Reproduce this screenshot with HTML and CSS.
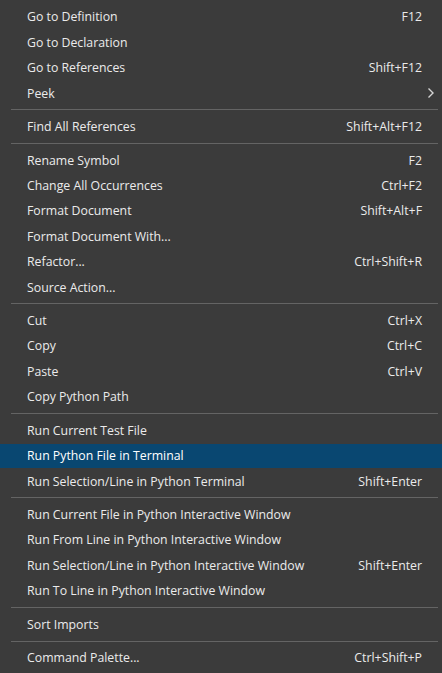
FILE: index.html
```html
<!DOCTYPE html>
<html>
<head>
<meta charset="utf-8">
<link rel="stylesheet" href="styles.css">
</head>
<body>
<div class="menu">
  <div class="item"><span class="label">Go to Definition</span><span class="key">F12</span></div>
  <div class="item"><span class="label">Go to Declaration</span><span class="key"></span></div>
  <div class="item"><span class="label">Go to References</span><span class="key">Shift+F12</span></div>
  <div class="item"><span class="label">Peek</span><span class="key"></span>
    <svg class="chev" width="8" height="12" viewBox="0 0 8 12"><path d="M1.5 1.5 L6 6 L1.5 10.5" fill="none" stroke="#d4d4d4" stroke-width="1.4"/></svg>
  </div>
  <div class="sep"></div>
  <div class="item"><span class="label">Find All References</span><span class="key">Shift+Alt+F12</span></div>
  <div class="sep"></div>
  <div class="item"><span class="label">Rename Symbol</span><span class="key">F2</span></div>
  <div class="item"><span class="label">Change All Occurrences</span><span class="key">Ctrl+F2</span></div>
  <div class="item"><span class="label">Format Document</span><span class="key">Shift+Alt+F</span></div>
  <div class="item"><span class="label">Format Document With...</span><span class="key"></span></div>
  <div class="item"><span class="label">Refactor...</span><span class="key">Ctrl+Shift+R</span></div>
  <div class="item"><span class="label">Source Action...</span><span class="key"></span></div>
  <div class="sep"></div>
  <div class="item"><span class="label">Cut</span><span class="key">Ctrl+X</span></div>
  <div class="item"><span class="label">Copy</span><span class="key">Ctrl+C</span></div>
  <div class="item"><span class="label">Paste</span><span class="key">Ctrl+V</span></div>
  <div class="item"><span class="label">Copy Python Path</span><span class="key"></span></div>
  <div class="sep"></div>
  <div class="item"><span class="label">Run Current Test File</span><span class="key"></span></div>
  <div class="item active"><span class="label">Run Python File in Terminal</span><span class="key"></span></div>
  <div class="item"><span class="label">Run Selection/Line in Python Terminal</span><span class="key">Shift+Enter</span></div>
  <div class="sep"></div>
  <div class="item"><span class="label">Run Current File in Python Interactive Window</span><span class="key"></span></div>
  <div class="item"><span class="label">Run From Line in Python Interactive Window</span><span class="key"></span></div>
  <div class="item"><span class="label">Run Selection/Line in Python Interactive Window</span><span class="key">Shift+Enter</span></div>
  <div class="item"><span class="label">Run To Line in Python Interactive Window</span><span class="key"></span></div>
  <div class="sep"></div>
  <div class="item"><span class="label">Sort Imports</span><span class="key"></span></div>
  <div class="sep"></div>
  <div class="item"><span class="label">Command Palette...</span><span class="key">Ctrl+Shift+P</span></div>
</div>
</body>
</html>
```

FILE: styles.css
```css
html, body {
  margin: 0;
  padding: 0;
  background: #3b3b3b;
}
body {
  width: 442px;
  height: 673px;
  overflow: hidden;
  font-family: "Open Sans", "Noto Sans", sans-serif;
  font-size: 12.3px;
  color: #ebebeb;
}
.menu {
  display: flex;
  flex-direction: column;
  padding-top: 4.2px;
}
.item {
  position: relative;
  display: flex;
  align-items: center;
  height: 24px;
  margin: 0.7px 0;
  padding: 0 20px 0 27px;
}
.item.active {
  background: #094771;
  color: #ffffff;
}
.label {
  flex: 1;
  white-space: nowrap;
}
.key {
  white-space: nowrap;
}
.chev {
  position: absolute;
  right: 7px;
  top: 6px;
}
.sep {
  height: 1px;
  margin: 3.6px 4px 3.6px 11px;
  background: #646464;
}
```
